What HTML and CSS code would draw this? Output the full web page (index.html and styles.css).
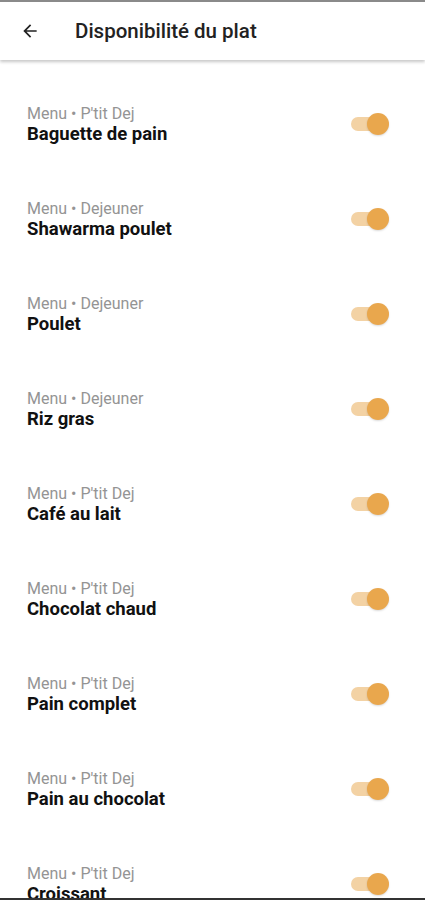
FILE: index.html
```html
<!DOCTYPE html>
<html lang="fr">
<head>
    <meta charset="UTF-8">
    <meta name="viewport" content="width=device-width, initial-scale=1.0">
    <title>Disponibilité du plat</title>
    <link rel="stylesheet" href="styles.css">
</head>
<body>
    <div class="app">
        <header class="topbar">
            <span class="back">
                <svg width="20" height="20" viewBox="0 0 24 24"><path d="M20 11H7.83l5.59-5.59L12 4l-8 8 8 8 1.41-1.41L7.83 13H20v-2z" fill="#222"/></svg>
            </span>
            <h1 class="title">Disponibilité du plat</h1>
        </header>

        <ul class="list">
            <li class="item">
                <div class="text"><div class="sub">Menu • P'tit Dej</div><div class="name">Baguette de pain</div></div>
                <span class="switch"><span class="thumb"></span></span>
            </li>
            <li class="item">
                <div class="text"><div class="sub">Menu • Dejeuner</div><div class="name">Shawarma poulet</div></div>
                <span class="switch"><span class="thumb"></span></span>
            </li>
            <li class="item">
                <div class="text"><div class="sub">Menu • Dejeuner</div><div class="name">Poulet</div></div>
                <span class="switch"><span class="thumb"></span></span>
            </li>
            <li class="item">
                <div class="text"><div class="sub">Menu • Dejeuner</div><div class="name">Riz gras</div></div>
                <span class="switch"><span class="thumb"></span></span>
            </li>
            <li class="item">
                <div class="text"><div class="sub">Menu • P'tit Dej</div><div class="name">Café au lait</div></div>
                <span class="switch"><span class="thumb"></span></span>
            </li>
            <li class="item">
                <div class="text"><div class="sub">Menu • P'tit Dej</div><div class="name">Chocolat chaud</div></div>
                <span class="switch"><span class="thumb"></span></span>
            </li>
            <li class="item">
                <div class="text"><div class="sub">Menu • P'tit Dej</div><div class="name">Pain complet</div></div>
                <span class="switch"><span class="thumb"></span></span>
            </li>
            <li class="item">
                <div class="text"><div class="sub">Menu • P'tit Dej</div><div class="name">Pain au chocolat</div></div>
                <span class="switch"><span class="thumb"></span></span>
            </li>
            <li class="item">
                <div class="text"><div class="sub">Menu • P'tit Dej</div><div class="name">Croissant</div></div>
                <span class="switch"><span class="thumb"></span></span>
            </li>
        </ul>
    </div>
</body>
</html>
```

FILE: styles.css
```css
* {
    margin: 0;
    padding: 0;
    box-sizing: border-box;
}

html, body {
    height: 100%;
    overflow: hidden;
}

body {
    font-family: Roboto, "Noto Sans", sans-serif;
    background: #fff;
    border-top: 2px solid #8a8a8a;
}

.app {
    height: 100%;
    display: flex;
    flex-direction: column;
    border-bottom: 2px solid #333;
    overflow: hidden;
}

.topbar {
    height: 58px;
    flex-shrink: 0;
    display: flex;
    align-items: center;
    background: #fff;
    box-shadow: 0 2px 3px rgba(0, 0, 0, 0.22);
    position: relative;
    z-index: 1;
}

.back {
    width: 20px;
    height: 20px;
    margin-left: 20px;
    display: flex;
}

.title {
    margin-left: 35px;
    font-size: 20.5px;
    font-weight: 500;
    color: #222;
}

.list {
    list-style: none;
    padding-top: 16px;
    flex: 1;
    overflow: hidden;
}

.item {
    height: 95px;
    display: flex;
    align-items: center;
    justify-content: space-between;
    padding: 0 38px 0 27px;
}

.text {
    padding-top: 2px;
}

.sub {
    font-size: 16px;
    line-height: 19px;
    color: #949494;
}

.name {
    font-size: 18.5px;
    line-height: 22px;
    font-weight: 700;
    color: #111;
}

.switch {
    width: 36px;
    height: 14px;
    border-radius: 7px;
    background: #f3d2a4;
    position: relative;
}

.thumb {
    position: absolute;
    right: -2px;
    top: -4px;
    width: 22px;
    height: 22px;
    border-radius: 50%;
    background: #e9a74d;
    box-shadow: 0 1px 2px rgba(0, 0, 0, 0.15);
}
```
